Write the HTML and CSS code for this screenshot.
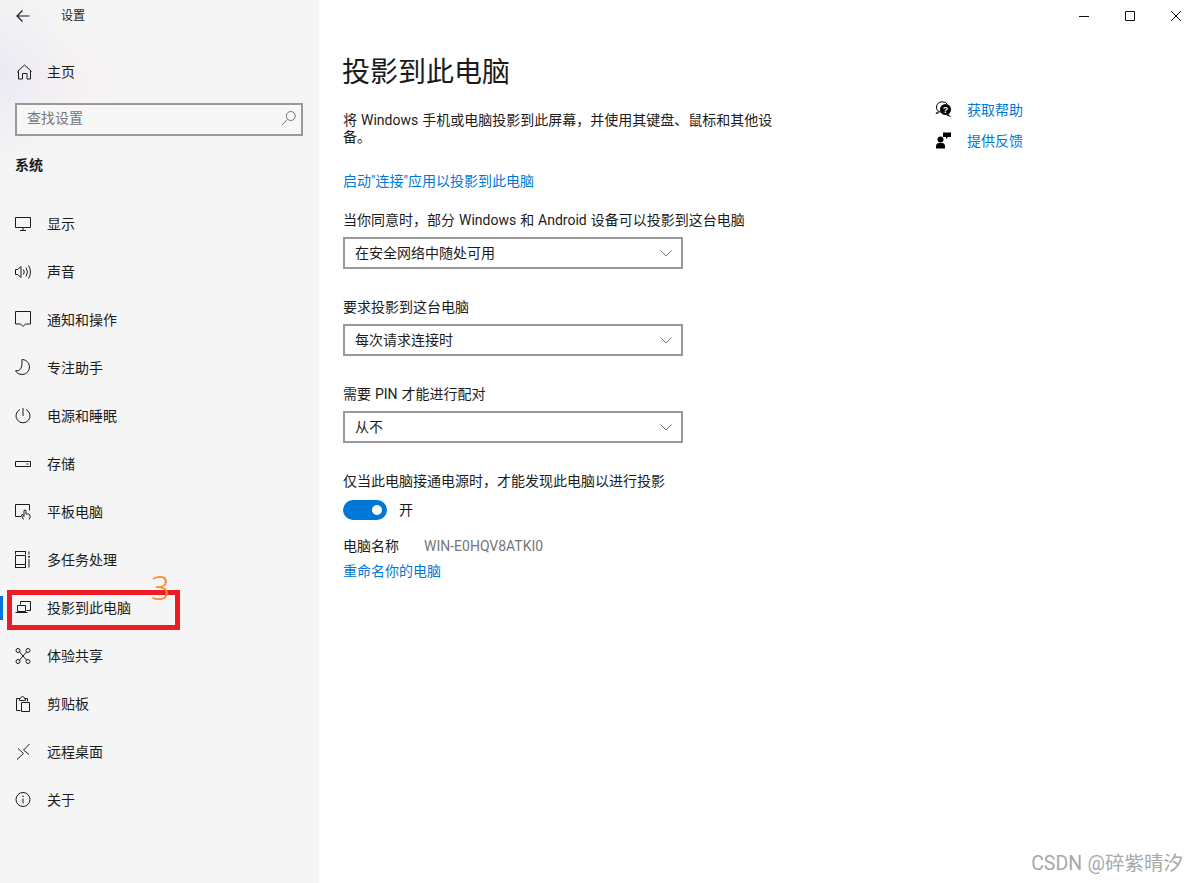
FILE: index.html
```html
<!DOCTYPE html>
<html lang="zh-CN">
<head>
<meta charset="utf-8">
<title>设置</title>
<link rel="stylesheet" href="styles.css">
</head>
<body>
<div class="app">
  <aside class="sidebar">
    <div class="topbar">
      <svg class="back" width="16" height="16" viewBox="0 0 16 16"><path d="M14.500 8H2M7.500 2.500 2 8l5.500 5.500"/></svg>
      <span class="app-title">设置</span>
    </div>
    <div class="home">
      <svg class="ico" width="16" height="16" viewBox="0 0 16 16"><path d="M2.500 15V7.500L1.500 8.500M1.500 7.500 8.500 1l7 6.500M14.500 7v8h-3.500V9.500H6.500V15h-4"/></svg>
      <span>主页</span>
    </div>
    <div class="search">
      <span>查找设置</span>
      <svg width="16" height="16" viewBox="0 0 16 16"><circle cx="9.800" cy="6" r="4.500"/><path d="M6.500 9.300 1 15"/></svg>
    </div>
    <div class="group">系统</div>
    <nav class="nav">
      <div class="item"><svg class="ico" width="16" height="16" viewBox="0 0 16 16"><path d="M.5 1.500h15v10H.5zM8 11.500V14M5 14.500h6"/></svg><span>显示</span></div>
      <div class="item"><svg class="ico" width="16" height="16" viewBox="0 0 16 16"><path d="M.5 5.500h2L6 2.500v11l-3.500-3h-2zM8.500 5.500q1.500 2.500 0 5M11 3.500q3 4.500 0 9M13.500 1.500q4 6.500 0 13"/></svg><span>声音</span></div>
      <div class="item"><svg class="ico" width="16" height="16" viewBox="0 0 16 16"><path d="M.5-.5h15v12.500h-5L8 14.500 5.500 12h-5z"/></svg><span>通知和操作</span></div>
      <div class="item"><svg class="ico" width="16" height="16" viewBox="0 0 16 16"><path d="M7-.5a7.500 7.500 0 1 1-6.500 11.300Q8 12 7-.5z"/></svg><span>专注助手</span></div>
      <div class="item"><svg class="ico" width="16" height="16" viewBox="0 0 16 16"><path d="M5 1.500a7 7 0 1 0 6 0M8 0v8"/></svg><span>电源和睡眠</span></div>
      <div class="item"><svg class="ico" width="16" height="16" viewBox="0 0 16 16"><path d="M.5 5.500h15v5H.5zM11.500 8h2"/></svg><span>存储</span></div>
      <div class="item"><svg class="ico" width="16" height="16" viewBox="0 0 16 16"><path d="M6 12.500H.5V.5h14v6M8.500 15.500 6.500 11l1-.5 1.500 2V6.500q1-1 2 0v3.500h2.500q1.500 0 1.500 2v1.500l-1 2"/></svg><span>平板电脑</span></div>
      <div class="item"><svg class="ico" width="16" height="16" viewBox="0 0 16 16"><path d="M0-.5h11M0 15.500h11M.5-.5v3M10.500-.5v3M.5 12.500v3M10.500 12.500v3M.5 3.500h10v9H.5zM14-.5v3M14 7v8.500"/><circle class="solid" cx="14" cy="4.800" r="1"/></svg><span>多任务处理</span></div>
      <div class="item current"><svg class="ico" width="16" height="16" viewBox="0 0 16 16"><path d="M5.500 4.500v-3h10v9h-4M2.500 5.500h8v6h-8zM.5 12.500h12"/></svg><span>投影到此电脑</span></div>
      <div class="item"><svg class="ico" width="16" height="16" viewBox="0 0 16 16"><circle cx="3" cy="2.500" r="2"/><circle cx="13" cy="2.500" r="2"/><circle cx="3" cy="13.500" r="2"/><circle cx="13" cy="13.500" r="2"/><path d="m4.500 4 7 8M11.500 4l-7 8"/></svg><span>体验共享</span></div>
      <div class="item"><svg class="ico" width="16" height="16" viewBox="0 0 16 16"><path d="M5.500 14.500h-4V2.500h3M9.500 2.500h3v3M4.500 4.500V2.500h1q.5-2 2-2t2 2h1v2zM6.500 6.500h8v9h-8z"/></svg><span>剪贴板</span></div>
      <div class="item"><svg class="ico" width="16" height="16" viewBox="0 0 16 16"><path d="M3 4.500 8.500 9.500 2 15.500M14.500 0 8.500 6l5.500 4.500"/></svg><span>远程桌面</span></div>
      <div class="item"><svg class="ico" width="16" height="16" viewBox="0 0 16 16"><circle cx="8" cy="7.500" r="7"/><path d="M8 6.500v5"/><circle class="solid" cx="8" cy="4.300" r=".8"/></svg><span>关于</span></div>
    </nav>
  </aside>

  <div class="pane">
    <div class="winbar">
      <svg class="win" width="10" height="10" viewBox="0 0 10 10"><path d="M0 5.500h10"/></svg>
      <svg class="win" width="10" height="10" viewBox="0 0 10 10"><path d="M.5.500h9v9h-9z"/></svg>
      <svg class="win" width="10" height="10" viewBox="0 0 10 10"><path d="m0 0 10 10M10 0 0 10"/></svg>
    </div>
    <div class="body">
      <main class="content">
        <h1>投影到此电脑</h1>
        <p class="desc">将 Windows 手机或电脑投影到此屏幕，并使用其键盘、鼠标和其他设备。</p>
        <a class="link start">启动"连接"应用以投影到此电脑</a>
        <label class="label first">当你同意时，部分 Windows 和 Android 设备可以投影到这台电脑</label>
        <div class="select"><span>在安全网络中随处可用</span><svg width="12" height="7" viewBox="0 0 12 7"><path d="m.5.500 5.500 5.500 5.500-5.500"/></svg></div>
        <label class="label">要求投影到这台电脑</label>
        <div class="select"><span>每次请求连接时</span><svg width="12" height="7" viewBox="0 0 12 7"><path d="m.5.500 5.500 5.500 5.500-5.500"/></svg></div>
        <label class="label">需要 PIN 才能进行配对</label>
        <div class="select"><span>从不</span><svg width="12" height="7" viewBox="0 0 12 7"><path d="m.5.500 5.500 5.500 5.500-5.500"/></svg></div>
        <label class="label">仅当此电脑接通电源时，才能发现此电脑以进行投影</label>
        <div class="toggle-row"><span class="toggle"><span class="knob"></span></span><span>开</span></div>
        <div class="name-row"><span>电脑名称</span><span class="value">WIN-E0HQV8ATKI0</span></div>
        <a class="link rename">重命名你的电脑</a>
      </main>
      <aside class="help">
        <div class="help-row">
          <svg width="17" height="17" viewBox="0 0 17 17"><path class="outline" d="M8 11.500Q1 11 1.500 6 2 1 7 .8q4-.3 5.500 2.700"/><path class="outline" d="M3 10.500 1 12.500l3-.8"/><circle class="fill" cx="10.500" cy="8.500" r="5.500"/><path class="fill" d="m13 13 3.500 3-5-1.500z"/><text class="q" x="10.500" y="11.500">?</text></svg>
          <a class="link">获取帮助</a>
        </div>
        <div class="help-row">
          <svg width="17" height="17" viewBox="0 0 17 17"><circle class="fill" cx="5.500" cy="7.500" r="3"/><path class="fill" d="M1 16.500v-2q0-3.500 3-3.500h3q3 0 3 3.500v2z"/><path class="fill" d="M8 .5h8V5h-3l-2 2V5H8z"/></svg>
          <a class="link">提供反馈</a>
        </div>
      </aside>
    </div>
  </div>
</div>
<div class="marker"><span class="marker-num">3</span></div>
<div class="watermark">CSDN @碎紫晴汐</div>
</body>
</html>
```
FILE: styles.css
```css
* { box-sizing: border-box; }
html, body { margin: 0; height: 100%; overflow: hidden; }
body {
  background: #fff;
  color: #1b1b1b;
  font-family: Roboto, "Noto Sans CJK SC", sans-serif;
  font-size: 14px;
  line-height: 20px;
  word-spacing: .5px;
  position: relative;
}
svg { flex: none; overflow: visible; fill: none; stroke: #1b1b1b; stroke-width: 1; }
.app { display: flex; height: 883px; }

/* sidebar */
.sidebar {
  width: 319px;
  flex: none;
  background:
    radial-gradient(ellipse 80px 90px at 0 75px, rgba(228,226,242,.6), rgba(228,226,242,0)),
    radial-gradient(ellipse 60px 50px at 75px 85px, rgba(250,235,238,.5), rgba(250,235,238,0)),
    #f5f5f5;
}
.topbar { height: 32px; display: flex; align-items: center; padding-left: 15px; }
.back { stroke-width: 1.2; }
.app-title { font-size: 12px; margin-left: 30px; color: #222; }
.home { height: 48px; margin-top: 16px; display: flex; align-items: center; padding-left: 16px; gap: 15px; }
.search {
  margin: 7px 16px 0 15px;
  height: 33px;
  border: 2px solid #999;
  background: #f7f7f7;
  display: flex;
  align-items: center;
  justify-content: space-between;
  padding: 0 4px 3px 10px;
  color: #777;
}
.search svg { stroke: #777; }
.group { font-weight: 700; padding-left: 15px; margin-top: 19px; }
.nav { margin-top: 25px; }
.item { height: 48px; display: flex; align-items: center; gap: 16px; padding-left: 15px; position: relative; }
.current::before { content: ""; position: absolute; left: 0; top: 12px; width: 3px; height: 24px; background: #0078d7; }
.solid { fill: #1b1b1b; stroke: none; }

/* right pane */
.pane { flex: 1; min-width: 0; }
.winbar { height: 32px; display: flex; justify-content: flex-end; align-items: center; gap: 36px; padding-right: 16px; }
.win { stroke: #111; }
.body { display: flex; padding-left: 24px; }
.content { width: 432px; flex: none; }
h1 { font-size: 28px; font-weight: 400; line-height: 40px; margin: 21px 0 0 -1px; }
.desc { margin: 19px 0 0; line-height: 17px; }
.link { color: #0078d7; display: block; }
.start { margin-top: 25px; }
.label { display: block; margin-top: 28px; margin-bottom: 7px; }
.label.first { margin-top: 19px; }
.select {
  width: 340px;
  height: 32px;
  border: 2px solid #999;
  display: flex;
  align-items: center;
  justify-content: space-between;
  padding: 0 9px 0 10px;
}
.select svg { stroke: #777; }
.toggle-row { display: flex; align-items: center; gap: 12px; height: 20px; margin-top: 9px; }
.toggle { width: 44px; height: 20px; border-radius: 10px; background: #0078d7; display: flex; align-items: center; justify-content: flex-end; padding-right: 5px; }
.knob { width: 10px; height: 10px; border-radius: 50%; background: #fff; }
.name-row { display: flex; margin-top: 16px; }
.value { margin-left: 25px; color: #767676; }
.rename { margin-top: 5px; }

.help { margin: 62px 0 0 160px; }
.help-row { display: flex; align-items: center; gap: 15px; height: 31px; }
.fill { fill: #000; stroke: none; }
.outline { stroke: #000; }
.q { fill: #fff; stroke: none; font: 700 9px "Liberation Sans", sans-serif; text-anchor: middle; }

/* annotations on top of the screenshot */
.marker { position: absolute; left: 7px; top: 590px; width: 173px; height: 40px; border: 5px solid #ed1c24; }
.marker-num { position: absolute; left: 139px; top: -29px; font: 300 33px/44px "Noto Sans", sans-serif; color: #ff8a2b; }
.watermark { position: absolute; right: 14px; top: 852px; font-size: 19.5px; line-height: 24px; color: #a8a8a8; white-space: nowrap; }
```
